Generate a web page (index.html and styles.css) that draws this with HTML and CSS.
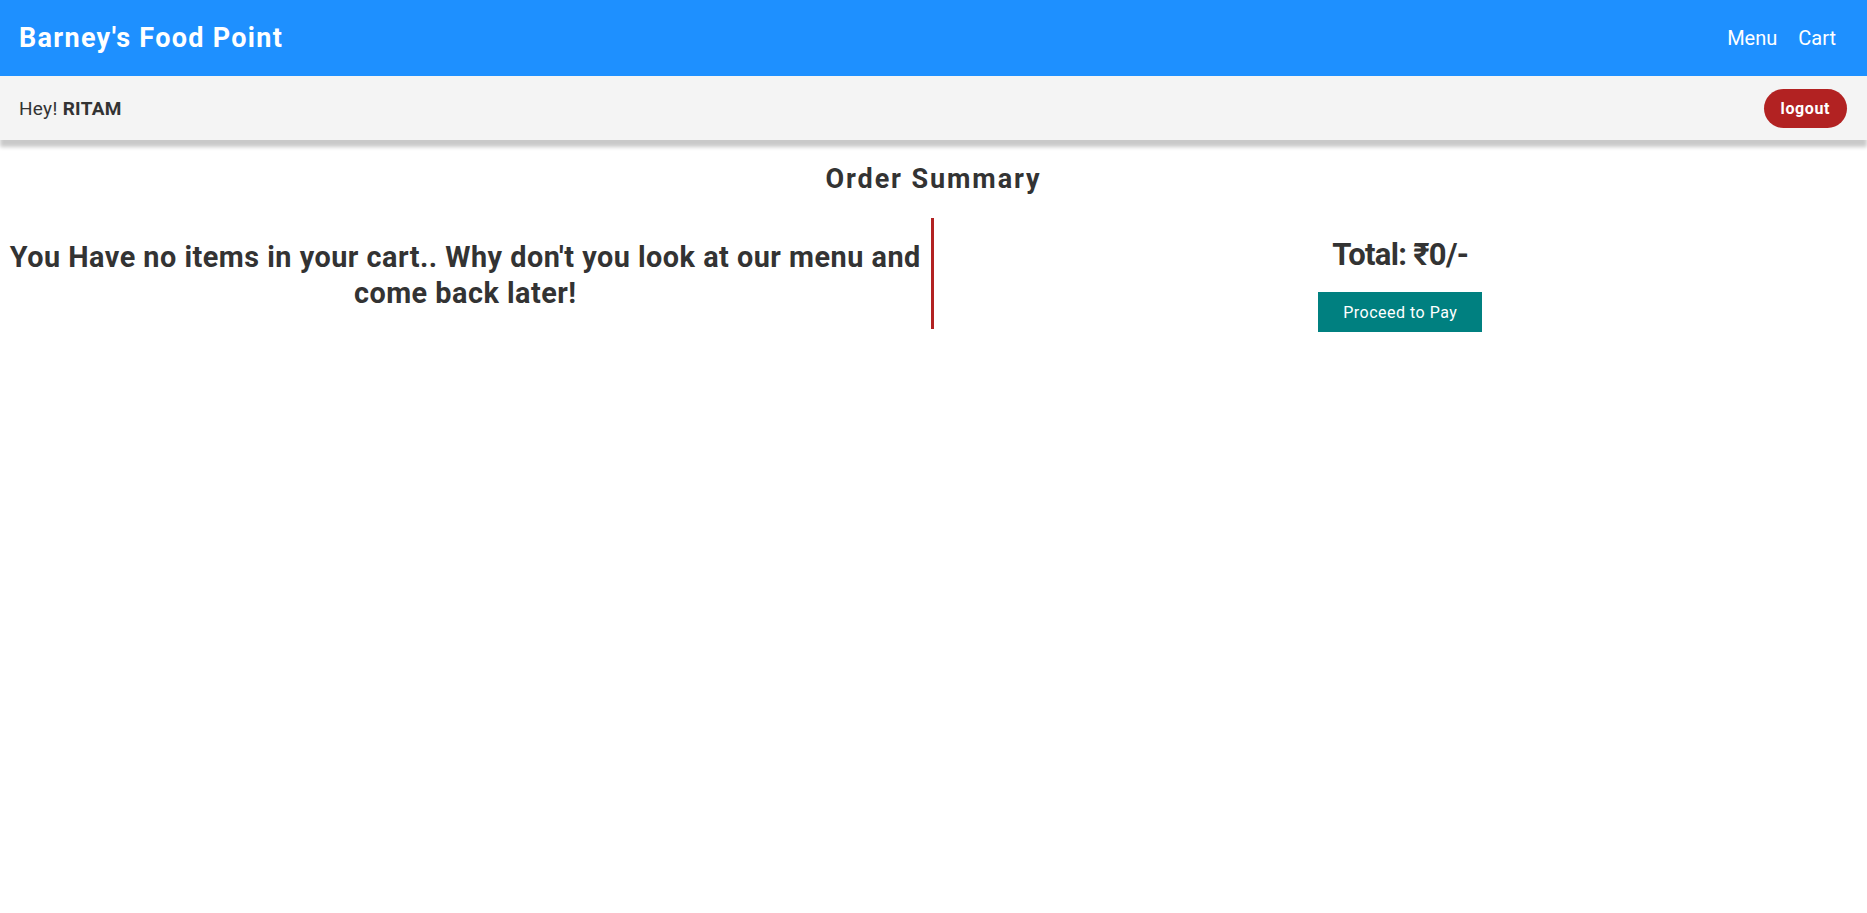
FILE: index.html
```html
<!DOCTYPE html>
<html lang="en">
<head>
<meta charset="utf-8">
<title>Barney's Food Point - Cart</title>
<link rel="stylesheet" href="styles.css">
</head>
<body>
<header class="topbar">
  <h1 class="brand">Barney's Food Point</h1>
  <nav class="nav">
    <a class="nav-link" href="#">Menu</a>
    <a class="nav-link" href="#">Cart</a>
  </nav>
</header>
<div class="userbar">
  <span class="greet">Hey! <b>RITAM</b></span>
  <button class="logout">logout</button>
</div>
<main class="main">
  <h2 class="page-title">Order Summary</h2>
  <div class="cols">
    <section class="items">
      <h2 class="empty">You Have no items in your cart.. Why don't you look at our menu and come back later!</h2>
    </section>
    <section class="summary">
      <h2 class="total">Total: ₹0/-</h2>
      <button class="pay">Proceed to Pay</button>
    </section>
  </div>
</main>
</body>
</html>
```
FILE: styles.css
```css
* { box-sizing: border-box; }
body {
  margin: 0;
  font-family: Roboto, "Liberation Sans", sans-serif;
  color: #333;
  background: #fff;
}
.topbar {
  height: 76px;
  background: #1e90ff;
  display: flex;
  align-items: center;
  justify-content: space-between;
  padding: 0 31px 0 19px;
}
.brand {
  margin: 0;
  font-size: 27px;
  font-weight: 700;
  letter-spacing: 1.3px;
  color: #fff;
}
.nav {
  display: flex;
  gap: 21px;
}
.nav-link {
  color: #fff;
  text-decoration: none;
  font-size: 20px;
}
.userbar {
  position: relative;
  height: 64px;
  background: #f4f4f4;
  display: flex;
  align-items: center;
  justify-content: space-between;
  padding: 0 20px 0 19px;
  box-shadow: 0 7px 4px #c9c9c9;
}
.greet {
  font-size: 19px;
  letter-spacing: 0.3px;
  color: #333;
}
.greet b { font-weight: 700; }
.logout {
  height: 39px;
  padding: 0 17px;
  border: none;
  border-radius: 20px;
  background: #b22222;
  color: #fff;
  font-family: inherit;
  font-size: 16px;
  font-weight: 700;
  letter-spacing: 0.6px;
}
.main { padding-top: 23px; }
.page-title {
  margin: 0 0 23px;
  text-align: center;
  font-size: 27px;
  font-weight: 700;
  letter-spacing: 1.9px;
}
.cols {
  display: flex;
  align-items: flex-start;
}
.items {
  flex: 0 0 50%;
  border-right: 3px solid #b22222;
  text-align: center;
}
.empty {
  margin: 21px 0 18px;
  font-size: 28.8px;
  line-height: 36px;
  font-weight: 700;
  letter-spacing: 0.5px;
}
.summary {
  flex: 1;
  text-align: center;
}
.total {
  margin: 18px 0 19px;
  font-size: 31px;
  font-weight: 700;
  letter-spacing: -0.7px;
}
.pay {
  height: 40px;
  padding: 0 25px;
  border: none;
  background: #008080;
  color: #fff;
  font-family: inherit;
  font-size: 16px;
  letter-spacing: 0.5px;
}
```
